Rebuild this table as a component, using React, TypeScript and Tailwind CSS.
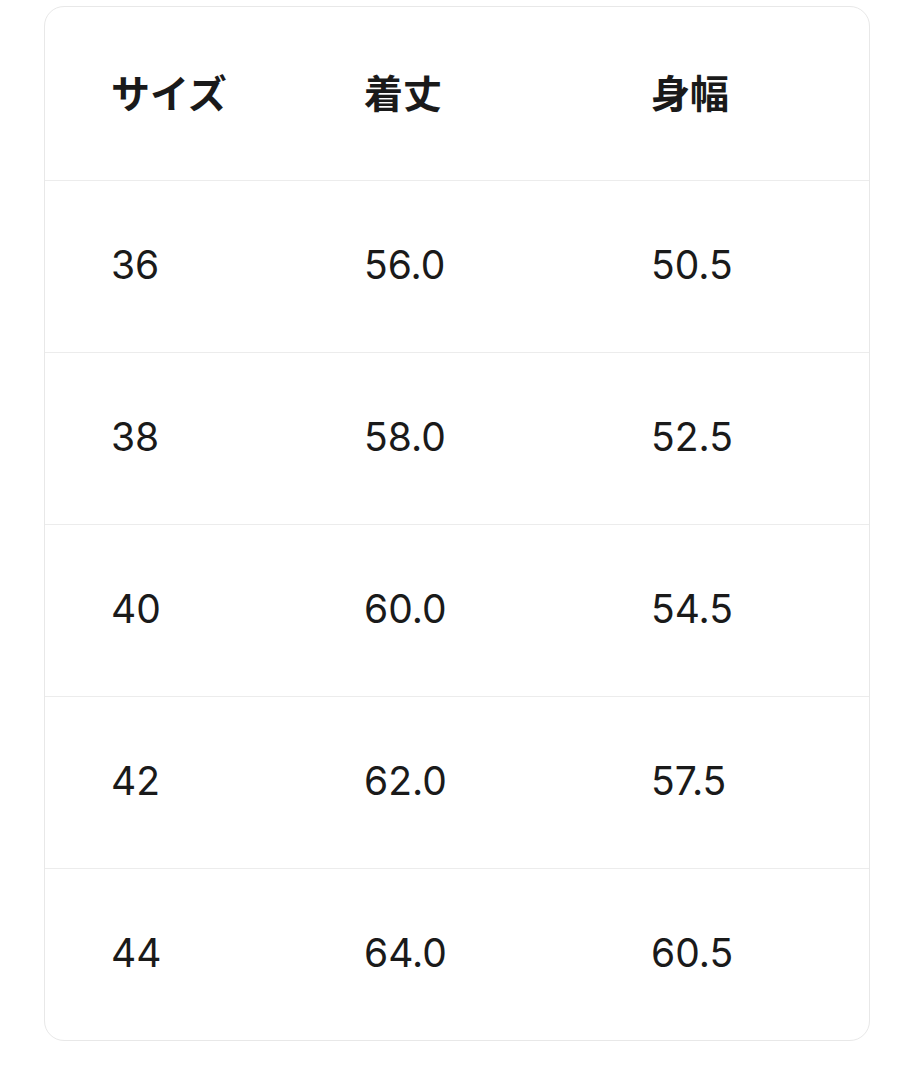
const ROWS = [
  ['36', '56.0', '50.5'],
  ['38', '58.0', '52.5'],
  ['40', '60.0', '54.5'],
  ['42', '62.0', '57.5'],
  ['44', '64.0', '60.5'],
];

const COLS = 'grid grid-cols-[253px_287px_1fr] items-center pl-[66px]';

export default function App() {
  return (
    <div className="min-h-[1080px] w-[913px] bg-white pt-[6px] pl-[44px]">
      <div className="w-[826px] rounded-[20px] border border-[#e8e8e8] bg-white text-[#1a1a1a]">
        {/* Header */}
        <div
          className={`${COLS} h-[173px] pb-[4px] text-[39px] font-bold`}
          style={{ fontFamily: '"Noto Sans CJK JP", "Noto Sans", sans-serif' }}
        >
          <span>サイズ</span>
          <span>着丈</span>
          <span>身幅</span>
        </div>

        {/* Rows */}
        {ROWS.map((r) => (
          <div
            key={r[0]}
            className={`${COLS} h-[172px] border-t border-[#ececec] pb-[3px] text-[39px]`}
            style={{ fontFamily: 'Inter, "Noto Sans CJK JP", sans-serif' }}
          >
            {r.map((v, i) => (
              <span key={i}>{v}</span>
            ))}
          </div>
        ))}
      </div>
    </div>
  );
}
